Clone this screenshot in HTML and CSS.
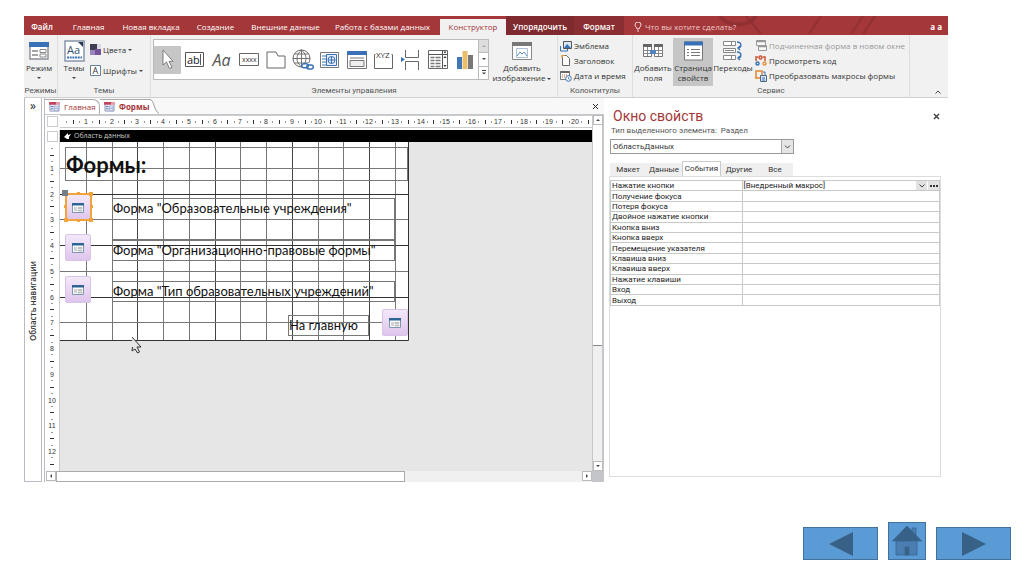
FILE: index.html
```html
<!DOCTYPE html>
<html lang="ru">
<head>
<meta charset="utf-8">
<title>Формы</title>
<link rel="stylesheet" href="styles.css">
</head>
<body>
<svg class="defs" width="0" height="0" aria-hidden="true">
  <symbol id="form" viewBox="0 0 20 18"><path d="M1 1h18v16H1z" fill="#fff" stroke="#8a8f96" stroke-width="1.4"/><path d="M0 0h20v5H0z" fill="#3871b5"/><path d="M3 9h6m-6 4h6" stroke="#888" stroke-width="1.3"/><path d="M11 7.500h6v3h-6zM11 12h6v3h-6z" fill="#fff" stroke="#888"/></symbol>
  <symbol id="tabform" viewBox="0 0 12 11"><path d="M1 1h10v9H1z" fill="#e5e9f5" stroke="#8d96b8"/><path d="M0 0h8v3H0z" fill="#c0455a"/><path d="M8 0h4v3H8z" fill="#e79aa5"/><path d="M2 5h3M2 7.500h3" stroke="#596fae"/><path d="M6 4.500h4v2H6zM6 7.500h4v2H6z" fill="#fff" stroke="#7f91c8" stroke-width=".7"/></symbol>
  <symbol id="launch" viewBox="0 0 12 10"><path d="M.5.5h11v9H.5z" fill="#f8fbfd" stroke="#7f96ac"/><path d="M0 0h12v2.500H0z" fill="#2e6595"/><path d="M2 5h3M2 7h3" stroke="#aaa"/><path d="M6 4.500h4v1H6zM6 7h4v1H6z" fill="#ddd" stroke="#aaa" stroke-width=".6"/></symbol>
</svg>
<main class="slide">
<section class="app">
  <nav class="tabs">
    <a class="tab file" href="#">Файл</a><a class="tab home" href="#">Главная</a><a class="tab new" href="#">Новая вкладка</a><a class="tab create" href="#">Создание</a><a class="tab ext" href="#">Внешние данные</a><a class="tab db" href="#">Работа с базами данных</a><a class="tab active" href="#">Конструктор</a><a class="tab dark arrange" href="#">Упорядочить</a><a class="tab dark format" href="#">Формат</a>
    <div class="tell">
      <svg class="art" width="230" height="18" viewBox="0 0 230 18" fill="none" stroke="#852c30" stroke-width="4"><path d="M62 0a20 15 0 0 0 36 0" /><path d="M88 0l15 18M151 18L163 0M193 18L205 0M205 18L217 0" stroke-width="2"/></svg>
      <svg width="8" height="10" viewBox="0 0 8 10" fill="none" stroke="#fff" stroke-width=".8"><path d="M3 7C3 5 1 5 1 3a3 3 0 0 1 6 0C7 5 5 5 5 7zM3 9h2"/></svg>
      <span>Что вы хотите сделать?</span><b class="user">а а</b>
    </div>
  </nav>
  <div class="ribbon">
    <div class="group modes">
      <div class="body"><button class="big"><svg width="20" height="18"><use href="#form"/></svg><span>Режим</span><i class="caret"></i></button></div>
      <div class="caption">Режимы</div>
    </div>
    <div class="group themes">
      <div class="body">
        <button class="big"><svg width="21" height="22" viewBox="0 0 21 22"><path d="M1 1h19v20H1z" fill="#fff" stroke="#8795ad" stroke-width="1.500"/><path d="M14 2h5v5z" fill="#29384e"/><text x="3" y="14" font-size="11" fill="#35526f">Аа</text><path d="M3 17.500h15" stroke="#3871b5" stroke-width="2" stroke-dasharray="2 .7"/></svg><span>Темы</span><i class="caret"></i></button>
        <div class="stack wide">
          <button class="small"><svg width="11" height="11" viewBox="0 0 11 11"><path d="M0 0h7v6H0z" fill="#413d55"/><path d="M7 0h4v5H7z" fill="#ded7e8"/><path d="M0 6h5v5H0z" fill="#9b83bd"/><path d="M5 5h6v6H5z" fill="#735597"/></svg>Цвета<i class="caret"></i></button>
          <button class="small"><svg width="11" height="11" viewBox="0 0 11 11"><path d="M.5.5h10v10H.5z" fill="#fff" stroke="#667f9b"/><text x="2.500" y="9" font-size="9" fill="#333">А</text></svg>Шрифты<i class="caret"></i></button>
        </div>
      </div>
      <div class="caption">Темы</div>
    </div>
    <div class="group controls">
      <div class="body">
        <div class="gallery">
          <button class="tool on" aria-label="Выбор"><svg width="12" height="21" viewBox="0 0 12 21"><path d="M1 1v15l3.500-3 3 6.500 2.500-1.200-3-6H11z" fill="#fff" stroke="#666" stroke-width=".8"/></svg></button>
          <button class="tool" aria-label="Поле"><svg width="19" height="16" viewBox="0 0 19 16"><path d="M.5.5h18v14H.5z" fill="#fff" stroke="#555"/><text x="2" y="12" font-size="11" fill="#222">ab</text><path d="M15.500 2v11" stroke="#555"/></svg></button>
          <button class="tool label-tool" aria-label="Надпись">Aa</button>
          <button class="tool" aria-label="Кнопка"><svg width="20" height="14" viewBox="0 0 20 14"><path d="M.5.5h19v12H.5z" fill="#fff" stroke="#666"/><text x="3" y="9" font-size="7" fill="#333">xxxx</text></svg></button>
          <button class="tool" aria-label="Вкладка"><svg width="20" height="18" viewBox="0 0 20 18"><path d="M1 17V1h9l2 4h7v12z" fill="#fff" stroke="#666"/></svg></button>
          <button class="tool" aria-label="Ссылка"><svg width="22" height="21" viewBox="0 0 22 21" fill="none"><circle cx="9.500" cy="9.500" r="8.500" stroke="#666"/><path d="M1 9.500h17M2.500 5h14M2.500 14h14M9.500 1v17M9.500 1c-6 5-6 12 0 17M9.500 1c6 5 6 12 0 17" stroke="#666" stroke-width=".9"/><path d="M10 14h12v7H10z" fill="#fff"/><rect x="9.800" y="14.800" width="6.500" height="4" rx="2" stroke="#3871b5" stroke-width="1.500"/><rect x="14.800" y="16" width="6.500" height="4" rx="2" stroke="#3871b5" stroke-width="1.500"/></svg></button>
          <button class="tool" aria-label="Веб-браузер"><svg width="19" height="16" viewBox="0 0 19 16" fill="none"><path d="M.5.5h18v15H.5z" fill="#fff" stroke="#777"/><path d="M2 4h4m-4 3h4m-4 3h4m-4 3h4" stroke="#3871b5"/><path d="M6.500 2.500h10v11h-10z" fill="#e7eef7" stroke="#3871b5"/><circle cx="11.500" cy="8" r="3.500" stroke="#3871b5"/><path d="M8 8h7M11.500 4.500v7" stroke="#3871b5"/></svg></button>
          <button class="tool" aria-label="Навигация"><svg width="20" height="18" viewBox="0 0 20 18"><path d="M.5.5h19v17H.5z" fill="#fff" stroke="#777"/><path d="M0 0h20v4H0z" fill="#3871b5"/><path d="M3 7h14M3 9.500h14v6H3z" fill="#eee" stroke="#777"/></svg></button>
          <button class="tool" aria-label="Группа"><svg width="21" height="20" viewBox="0 0 21 20"><path d="M2.500 4.500h-1v14h18v-14h-1" fill="none" stroke="#666"/><text x="3" y="8" font-size="8" fill="#333">XYZ</text></svg></button>
          <button class="tool" aria-label="Разрыв"><svg width="19" height="20" viewBox="0 0 19 20" fill="none" stroke="#666"><path d="M4.500 0v7.500h13V0M4.500 20v-8.500h13V20"/><path d="M0 7l4 2.500L0 12z" fill="#3871b5" stroke="none"/></svg></button>
          <button class="tool" aria-label="Поле со списком"><svg width="20" height="19" viewBox="0 0 20 19"><path d="M.5.5h19v18H.5z" fill="#fff" stroke="#666"/><path d="M.5 4.500h19M14.500 0v18" stroke="#555"/><path d="M2.500 7.500h4m1 0h5m-10 3h4m1 0h5m-10 3h4m1 0h5m-10 3h4m1 0h5" stroke="#777" stroke-width="1.300"/><path d="M15.500 1.500h3l-1.500 2zM15.500 8l1.500-2 1.500 2zM15.500 15h3L17 17z" fill="#333"/></svg></button>
          <button class="tool" aria-label="Диаграмма"><svg width="16" height="18" viewBox="0 0 16 18"><path d="M0 6h5v12H0z" fill="#3f76b5"/><path d="M5.500 0h5v18h-5z" fill="#e9bd69"/><path d="M11 4h5v14h-5z" fill="#777"/></svg></button>
          <div class="spin"><button class="off" aria-label="Вверх"><i class="caret up"></i></button><button aria-label="Вниз"><i class="caret"></i></button><button aria-label="Ещё"><svg width="4" height="5" viewBox="0 0 4 5"><path d="M0 .5h4" stroke="#444"/><path d="M0 2.500h4l-2 2z" fill="#444"/></svg></button></div>
        </div>
        <button class="big"><svg width="20" height="18" viewBox="0 0 20 18"><path d="M.5.5h19v17H.5z" fill="#fff" stroke="#888"/><path d="M0 0h20v4H0z" fill="#777"/><path d="M4.500 6.500h11v9h-11z" fill="#fff" stroke="#a9bfd9"/><path d="M5 14l3-4 2 2 2-2 3 4" fill="none" stroke="#5c91c9"/></svg><span>Добавить</span><span>изображение <i class="caret"></i></span></button>
      </div>
      <div class="caption">Элементы управления</div>
    </div>
    <div class="group titles">
      <div class="body"><div class="stack">
        <button class="small"><svg width="12" height="12" viewBox="0 0 12 12"><path d="M3.500 1.500h8v7h-8z" fill="#d9e7f4" stroke="#555"/><path d="M4 8l3-4 4 4z" fill="#3871b5"/><path d="M.5 6v5h7v-2" fill="none" stroke="#3871b5"/></svg>Эмблема</button>
        <button class="small"><svg width="12" height="11" viewBox="0 0 12 11"><path d="M2.500.5h4l3 3v7h-7z" fill="#fff" stroke="#666"/><path d="M2 3V0h3" fill="none" stroke="#e8a54e" stroke-width="1.500"/></svg>Заголовок</button>
        <button class="small"><svg width="12" height="12" viewBox="0 0 12 12"><path d="M.5 1.500h9v8h-9z" fill="#fff" stroke="#777"/><path d="M.5 2h9" stroke="#666" stroke-width="2"/><path d="M2 5h6M2 7h4" stroke="#c56a4b" stroke-dasharray="1 1"/><circle cx="8.500" cy="8.500" r="2.800" fill="#fff" stroke="#3871b5"/><path d="M8.500 7v2h1.500" stroke="#3871b5" stroke-width=".7" fill="none"/></svg>Дата и время</button>
      </div></div>
      <div class="caption">Колонтитулы</div>
    </div>
    <div class="group service">
      <div class="body">
        <button class="big"><svg width="20" height="18" viewBox="0 0 20 18"><path d="M.5 2.500h8v12h-8zM11.500 2.500h8v12h-8z" fill="#fff" stroke="#777"/><path d="M0 2h9v3H0zM11 2h9v3h-9z" fill="#666"/><path d="M.5 8.500h19M.5 11.500h19M4.500 5v9M15.500 5v9" stroke="#888"/><path d="M7 8h6v4H7z" fill="#4f83bd"/></svg><span>Добавить</span><span>поля</span></button>
        <button class="big on"><svg width="19" height="19" viewBox="0 0 19 19"><path d="M.5.5h18v18H.5z" fill="#fff" stroke="#777"/><path d="M0 0h19v4H0z" fill="#3871b5"/><path d="M3 8h2m2 0h9M3 11h2m2 0h9M3 14h2m2 0h9" stroke="#777"/></svg><span>Страница</span><span>свойств</span></button>
        <button class="big"><svg width="20" height="20" viewBox="0 0 20 20" fill="#fff" stroke="#888"><path d="M.5.500h12v4H.5zM.5 7.500h12v4H.5zM.5 14.500h12v4H.5z"/><path d="M8.500 1v3M2 9.500h9M8.500 15v3"/><path d="M14 1c5 0 5 6 1 6m2-2l-2 2 2 2M14 11c5 0 5 6 1 6m2-2l-2 2 2 2" fill="none" stroke="#3871b5" stroke-width="1.400"/></svg><span>Переходы</span></button>
        <div class="stack last">
          <button class="small" disabled><svg width="12" height="11" viewBox="0 0 12 11" fill="#f8f8f8" stroke="#999"><path d="M1.500.5h9v5h-9zM3.500 5.500h8v5h-8z"/><path d="M1 1.500h10M3 6.500h9" stroke-width="1.500"/></svg>Подчиненная форма в новом окне</button>
          <button class="small"><svg width="12" height="11" viewBox="0 0 12 11" fill="none" stroke-width="1.500"><circle cx="5.500" cy="2.500" r="1.500" stroke="#d9502e"/><circle cx="2.500" cy="8.500" r="1.500" stroke="#3871b5"/><circle cx="9.500" cy="8.500" r="1.500" stroke="#e39743"/><path d="M3 2H1v4M8 2h2v4" stroke="#c35835"/></svg>Просмотреть код</button>
          <button class="small"><svg width="12" height="12" viewBox="0 0 12 12" fill="none"><path d="M1 8V1h6v5" stroke="#e1852c" stroke-width="1.500"/><path d="M0 8h6" stroke="#e1852c" stroke-width="1.500"/><path d="M5.500 5.500h6v6h-6z" fill="#dce7f4" stroke="#4f6884"/><path d="M8 2h2v3M7 8h3m-3 2h3" stroke="#3871b5"/></svg>Преобразовать макросы формы</button>
        </div>
      </div>
      <div class="caption">Сервис</div>
    </div>
    <button class="collapse" aria-label="Свернуть ленту"><svg width="6" height="4" viewBox="0 0 6 4"><path d="M.5 3.500L3 1l2.500 2.500" fill="none" stroke="#444"/></svg></button>
  </div>
  <div class="workspace">
    <aside class="navpane"><button>»</button><span>Область навигации</span></aside>
    <section class="doc">
      <div class="doctabs">
        <a href="#" class="doctab"><svg width="11" height="10"><use href="#tabform"/></svg>Главная</a>
        <a href="#" class="doctab current"><svg width="11" height="10"><use href="#tabform"/></svg>Формы</a>
        <svg class="slope" width="9" height="15" viewBox="0 0 9 15"><path d="M0 .5C4 .5 4 12 9 14.500V15H0z" fill="#fff"/><path d="M0 .5C4 .5 4 12 9 14.500" fill="none" stroke="#999"/></svg>
        <button class="closedoc" aria-label="Закрыть"><svg width="5" height="5" viewBox="0 0 5 5"><path d="M0 0l5 5M5 0L0 5" stroke="#222"/></svg></button>
      </div>
      <div class="design">
        <i class="corner"></i>
        <svg class="hruler" id="hruler" height="13"></svg>
        <div class="vscroll"><button aria-label="Вверх"><i class="caret up"></i></button><i class="thumb"></i><button class="end" aria-label="Вниз"><i class="caret"></i></button></div>
        <div class="vr"><i class="corner"></i><svg id="vruler" width="12" height="325"></svg></div>
        <div class="surface">
          <div class="band"><svg width="7" height="7" viewBox="0 0 7 7"><path d="M0 4l4-4v2l3-1-2 3v2H3z" fill="#fff"/></svg>Область данных</div>
          <div class="canvas">
            <svg id="grid" width="349" height="199"></svg>
            <h1 class="ctl heading">Формы:</h1>
            <button class="ctl open one" aria-label="Открыть"><svg width="12" height="10"><use href="#launch"/></svg></button>
            <label class="ctl l1">Форма "Образовательные учреждения"</label>
            <button class="ctl open two" aria-label="Открыть"><svg width="12" height="10"><use href="#launch"/></svg></button>
            <label class="ctl l2">Форма "Организационно-правовые формы"</label>
            <button class="ctl open three" aria-label="Открыть"><svg width="12" height="10"><use href="#launch"/></svg></button>
            <label class="ctl l3">Форма "Тип образовательных учреждений"</label>
            <label class="ctl l4">На главную</label>
            <button class="ctl open four" aria-label="На главную"><svg width="12" height="10"><use href="#launch"/></svg></button>
            <svg class="ctl handles" width="32" height="34" viewBox="0 0 32 34"><path d="M4 4h25v26H4z" fill="none" stroke="#f3a33c" stroke-width="2"/><path d="M2 15h3v3H2zM15 2h3v3h-3zM27 2h4v4h-4zM28 15h3v3h-3zM27 28h4v4h-4zM15 29h3v3h-3zM2 28h4v4H2z" fill="#f3a33c"/><path d="M0 0h6v6H0z" fill="#777f86"/></svg>
            <svg class="ctl pointer" width="13" height="20" viewBox="0 0 13 20"><path d="M2 1l9 10H7l2.500 5-2 1-2.500-4-3 2 .5-4" fill="#e6e6e6" stroke="#333"/></svg>
          </div>
        </div>
        <div class="hscroll"><button aria-label="Влево"><i class="caret left"></i></button><i class="thumb"></i><button class="end" aria-label="Вправо"><i class="caret right"></i></button></div>
        <i class="grip"></i>
      </div>
    </section>
    <aside class="props">
      <div class="ptitle"><h2>Окно свойств</h2><button aria-label="Закрыть"><svg width="7" height="7" viewBox="0 0 7 7"><path d="M1 1l5 5M6 1L1 6" stroke="#444" stroke-width="1.500"/></svg></button></div>
      <label class="ptype" for="obj">Тип выделенного элемента: &nbsp;Раздел</label>
      <div class="selwrap"><select id="obj"><option>ОбластьДанных</option></select><i><svg width="7" height="4" viewBox="0 0 7 4"><path d="M1 .5l2.500 2.500L6 .5" fill="none" stroke="#444"/></svg></i></div>
      <div class="ptabs"><button>Макет</button><button>Данные</button><button class="sel">События</button><button>Другие</button><button>Все</button></div>
      <div class="sheet">
        <table>
          <tr><th>Нажатие кнопки</th><td><div class="val"><span>[Внедренный макрос]</span><button aria-label="Список"><svg width="6" height="4" viewBox="0 0 6 4"><path d="M.5.5L3 3 5.500.5" fill="none" stroke="#444"/></svg></button><button aria-label="Построитель"><svg width="8" height="2" viewBox="0 0 8 2"><path d="M0 1h8" stroke="#333" stroke-width="2" stroke-dasharray="2 1"/></svg></button></div></td></tr>
          <tr><th>Получение фокуса</th><td></td></tr>
          <tr><th>Потеря фокуса</th><td></td></tr>
          <tr><th>Двойное нажатие кнопки</th><td></td></tr>
          <tr><th>Кнопка вниз</th><td></td></tr>
          <tr><th>Кнопка вверх</th><td></td></tr>
          <tr><th>Перемещение указателя</th><td></td></tr>
          <tr><th>Клавиша вниз</th><td></td></tr>
          <tr><th>Клавиша вверх</th><td></td></tr>
          <tr><th>Нажатие клавиши</th><td></td></tr>
          <tr><th>Вход</th><td></td></tr>
          <tr><th>Выход</th><td></td></tr>
        </table>
      </div>
    </aside>
  </div>
</section>
<nav class="pager">
  <a href="#" class="page" aria-label="Назад"><svg width="24" height="24" viewBox="0 0 24 24"><path d="M0 12L24 0v24z" fill="#376187"/></svg></a>
  <a href="#" class="page home-page" aria-label="Домой"><svg width="30" height="30" viewBox="0 0 30 30" stroke="#37648f" stroke-width=".8"><path d="M20 2h4v10h-4z" fill="#4a7eb0"/><path d="M4 14h21v15H4z" fill="#4a7eb0"/><path d="M15 0l14.500 15H.5z" fill="#376187"/><path d="M13 21h4v8h-4z" fill="#376187"/></svg></a>
  <a href="#" class="page" aria-label="Вперёд"><svg width="24" height="24" viewBox="0 0 24 24"><path d="M24 12L0 0v24z" fill="#376187"/></svg></a>
</nav>
</main>
<script src="script.js"></script>
</body>
</html>
```
FILE: styles.css
```css
* { box-sizing: border-box; }
body { margin: 0; background: #fff; color: #333; font: 8px/10px "Open Sans", "Noto Sans", sans-serif; }
button { font: inherit; color: inherit; border: 0; padding: 0; margin: 0; background: none; }
a { color: inherit; text-decoration: none; }
h1, h2 { margin: 0; font-weight: 400; }
svg { display: block; flex: none; }
.defs { position: absolute; }
.slide { min-height: 100vh; display: flex; flex-direction: column; }
.app { margin: 16px 76px 0 24px; }
.caret { display: inline-block; vertical-align: middle; border: 2px solid transparent; border-top-color: #444; border-bottom: 0; }
.caret.up { border-top: 0; border-bottom: 2px solid #444; }
.caret.left { border: 2px solid transparent; border-left: 0; border-right-color: #444; }
.caret.right { border: 2px solid transparent; border-right: 0; border-left-color: #444; }

.tabs { display: flex; height: 19px; background: #a4373a; color: #fff; white-space: nowrap; }
.tab { display: flex; align-items: center; justify-content: center; padding-top: 3px; }
.file { width: 36px; font-weight: 600; }
.home { width: 57px; }
.new { width: 68px; }
.create { width: 61px; }
.ext { width: 79px; }
.db { width: 115px; }
.active { width: 66px; margin-top: 3px; padding-top: 0; background: #f1f1f1; color: #a4373a; }
.dark { background: #7f2a2e; font-weight: 600; }
.arrange { width: 68px; }
.format { width: 50px; background: #8b2e32; }
.tell { flex: 1; display: flex; align-items: center; gap: 3px; padding: 3px 6px 0 10px; position: relative; color: #edc8c9; }
.art { position: absolute; right: 60px; top: 0; opacity: .6; }
.tell span, .user { position: relative; }
.user { margin-left: auto; color: #fff; }

.ribbon { display: flex; height: 63px; background: #f1f1f1; border-bottom: 1px solid #d0d0d0; white-space: nowrap; }
.group { display: flex; flex-direction: column; border-right: 1px solid #dedede; }
.body { flex: 1; display: flex; padding-top: 3px; }
.caption { height: 11px; text-align: center; color: #555; font-family: Roboto, "Open Sans", sans-serif; }
.big { display: flex; flex-direction: column; align-items: center; padding-top: 2px; }
.big svg { height: 22px; margin-bottom: 1px; }
.big.on { background: #c6c6c6; }
.big .caret { margin-top: 4px; }
.big span .caret { margin: 0; }
.small { display: flex; align-items: center; gap: 2px; height: 15px; }
.small:disabled { color: #999; }
.stack { display: flex; flex-direction: column; }
.wide { gap: 6px; padding-top: 4px; }
.modes { width: 34px; }
.modes .big { width: 30px; }
.themes { width: 93px; }
.themes .big { width: 32px; }
.controls { width: 407px; }
.controls .body { padding-left: 2px; gap: 4px; }
.controls .big { width: 58px; }
.gallery { display: flex; height: 41px; margin-top: 1px; background: #fff; border: 1px solid #bbb; }
.tool { width: 27px; display: flex; align-items: center; justify-content: center; }
.tool.on { background: #c6c6c6; height: 28px; align-self: center; }
.label-tool { font-size: 16px; line-height: 24px; font-style: italic; color: #555; }
.spin { width: 10px; display: flex; flex-direction: column; border-left: 1px solid #bbb; }
.spin button { flex: 1; display: flex; align-items: center; justify-content: center; border-bottom: 1px solid #bbb; }
.spin button:last-child { border-bottom: 0; }
.spin .off { background: #ddd; }
.spin .off .caret { border-bottom-color: #aaa; }
.titles { width: 75px; }
.titles .stack { padding-left: 2px; }
.service { width: 277px; }
.service .big { width: 40px; }
.last { padding-left: 2px; }
.collapse { margin: auto 7px 3px auto; }

.workspace { display: flex; min-height: 384px; }
.navpane { width: 18px; display: flex; flex-direction: column; align-items: center; border: 1px solid #b9bcc2; border-top: 0; }
.navpane button { font-size: 12px; height: 16px; color: #222; line-height: 12px; }
.navpane span { margin-top: auto; margin-bottom: 140px; writing-mode: vertical-rl; transform: rotate(180deg); font-weight: 600; font-size: 8px; }
.doc { flex: 559; display: flex; flex-direction: column; margin-left: 2px; border-left: 1px solid #b9bcc2; min-width: 0; }
.doctabs { display: flex; height: 17px; padding-top: 1px; background: #f8f8f8; border-bottom: 1px solid #c4c7cc; color: #a4373a; }
.doctab { display: flex; align-items: center; gap: 4px; width: 55px; padding-left: 4px; border: 1px solid #aaa; border-width: 1px 1px 0 0; border-radius: 0 7px 0 0; background: #fff; }
.current { font-weight: 700; width: 50px; border-right: 0; border-radius: 0; }
.closedoc { margin: auto 6px auto auto; }
.design { flex: 1; display: grid; grid-template: 15px 1fr 11px / 14px 1fr 12px; background: #fff; padding-left: 1px; }
.corner { display: block; width: 11px; height: 11px; border: 1px solid #ccc; margin: 1px; }
.hruler { width: 100%; border: solid #ccc; border-width: 1px 0; }
.hruler text, .vr text { font: 7px "Liberation Sans", sans-serif; fill: #333; text-anchor: middle; }
.vscroll { grid-row: 1 / 3; grid-column: 3; display: flex; flex-direction: column; background: #f0f0f0; border: 1px solid #c4c7cc; border-width: 0 2px 0 1px; }
.vscroll button, .hscroll button { width: 10px; height: 10px; flex: none; display: flex; align-items: center; justify-content: center; background: #fff; border: 1px solid #bbb; }
.vscroll .thumb { height: 62%; background: #fff; border-bottom: 1px solid #888; }
.vscroll .end { margin-top: auto; }
.vr { grid-row: 2; border-right: 1px solid #ccc; }
.surface { grid-column: 2; grid-row: 2; background: #e6e6e6; min-width: 0; }
.band { height: 12px; display: flex; align-items: center; gap: 3px; padding-left: 4px; background: #000; color: #ccc; font-size: 7px; }
.hscroll { grid-row: 3; grid-column: 1 / 3; display: flex; background: #f0f0f0; }
.hscroll .thumb { width: 64%; background: #fff; border: 1px solid #aaa; }
.hscroll .end { margin-left: auto; }
.grip { background: #c3c5ca; }

.canvas { position: relative; width: 349px; height: 199px; background: #fff; color: #111; font-family: "Comic Sans MS", Lato, sans-serif; }
.ctl { position: absolute; }
.heading { left: 5px; top: 5px; width: 343px; height: 34px; border: 1px solid #777; font-size: 22px; line-height: 34px; font-weight: 700; }
label.ctl { left: 52px; height: 42px; border: 1px solid #777; font-size: 13px; line-height: 18px; white-space: nowrap; }
label.l1 { top: 56px; width: 283px; }
label.l2 { top: 98px; width: 283px; height: 21px; }
label.l3 { top: 139px; width: 283px; height: 21px; }
label.l4 { left: 228px; top: 173px; width: 81px; height: 21px; }
.open { display: flex; align-items: center; justify-content: center; width: 26px; height: 27px; border: 1px solid #d8c4e6; border-radius: 2px; background: linear-gradient(#f3e8f9, #dfc5ed); left: 5px; }
.one { top: 52px; }
.two { top: 92px; }
.three { top: 134px; }
.four { left: 322px; top: 167px; }
.handles { left: 2px; top: 48px; }
.pointer { left: 70px; top: 194px; }

.props { flex: 332; display: flex; flex-direction: column; padding: 8px 7px 5px 5px; min-width: 0; font-family: Roboto, "Open Sans", sans-serif; }
.ptitle { display: flex; justify-content: space-between; align-items: center; padding: 0 1px 0 4px; }
.ptitle h2 { font-size: 14px; line-height: 20px; color: #a4373a; }
.ptype { color: #555; padding-left: 2px; line-height: 10px; }
.selwrap { position: relative; width: 184px; margin: 3px 0 8px 1px; }
.selwrap select { display: block; width: 100%; height: 15px; appearance: none; border: 1px solid #999; border-radius: 0; background: #fff; font: inherit; color: #333; padding: 0 2px; }
.selwrap i { position: absolute; right: 1px; top: 1px; width: 12px; height: 13px; display: flex; align-items: center; justify-content: center; background: #e5e5e5; border-left: 1px solid #aaa; pointer-events: none; }
.ptabs { display: flex; align-items: flex-end; height: 14px; margin-left: 1px; }
.ptabs button { width: 36px; height: 13px; background: #efefef; color: #333; }
.ptabs .sel { height: 15px; width: 39px; background: #fff; border: 1px solid #ccc; border-bottom: 0; }
.sheet { flex: 1; border: 1px solid #ddd; padding: 3px 0; }
table { width: 100%; height: 126px; border-collapse: collapse; table-layout: fixed; }
tr { height: 10px; }
th, td { padding: 0 0 0 1px; border: 1px solid #c8c8c8; text-align: left; font-weight: 400; line-height: 9px; font-size: 8px; color: #222; }
th { width: 40%; }
.val { display: flex; gap: 1px; }
.val span { flex: 1; }
.val button { width: 11px; height: 9px; display: flex; align-items: center; justify-content: center; background: #e2e2e2; }

.pager { display: flex; justify-content: flex-end; align-items: flex-end; gap: 10px; margin-top: auto; padding: 0 13px 14px; }
.page { display: flex; align-items: center; justify-content: center; width: 75px; height: 33px; background: #5b9bd5; border: 1px solid #41719c; }
.home-page { width: 38px; height: 38px; }
```
FILE: script.js
```js
const NS = "http://www.w3.org/2000/svg";
const STEP = 25.75;

function add(parent, name, attrs, text) {
  const node = document.createElementNS(NS, name);
  for (const key in attrs) node.setAttribute(key, attrs[key]);
  if (text) node.textContent = text;
  parent.appendChild(node);
}

function ruler(svg, start, count, vertical) {
  for (let q = 1; q <= count * 4 + 2; q++) {
    const at = Math.round(start + q * STEP / 4);
    const half = q % 4 === 2;
    if (q % 4 === 0) {
      add(svg, "text", vertical ? { x: 6, y: at + 3 } : { x: at, y: 8 }, String(q / 4));
    } else {
      const size = half ? 4 : 1;
      add(svg, "rect", vertical
        ? { x: 6 - size / 2, y: at, width: size, height: 1, fill: "#333" }
        : { x: at, y: 6 - size / 2, width: 1, height: size, fill: "#333" });
    }
  }
}

ruler(document.getElementById("hruler"), 0, 20, false);
ruler(document.getElementById("vruler"), -1, 12, true);

const grid = document.getElementById("grid");
for (let i = 1; i <= 13; i++) {
  add(grid, "rect", { x: Math.round(i * STEP), y: 0, width: 1, height: 199, fill: i % 3 ? "#777" : "#444" });
}
for (let i = 1; i <= 7; i++) {
  add(grid, "rect", { x: 0, y: Math.round(i * STEP), width: 349, height: 1, fill: i % 2 ? "#777" : "#333" });
}
add(grid, "path", { d: "M348.500 0v198.500H0", fill: "none", stroke: "#333" });
```
